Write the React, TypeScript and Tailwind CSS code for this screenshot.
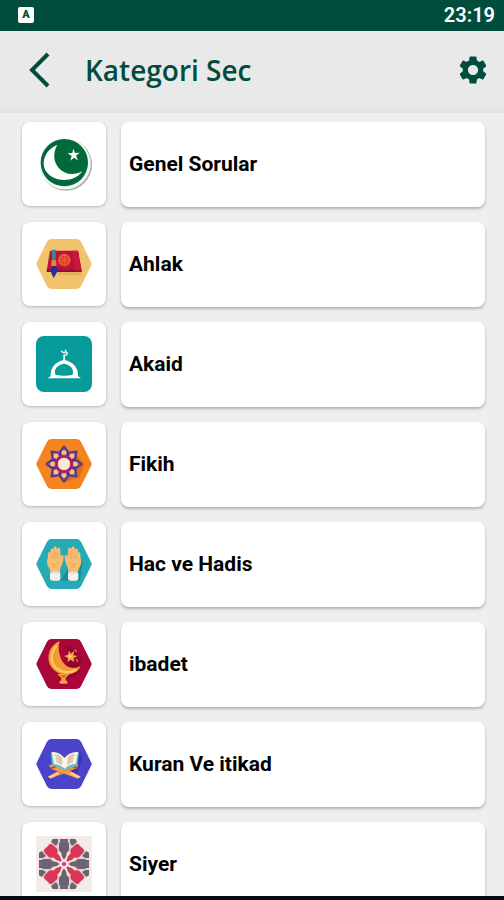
import { FC, ReactNode } from "react";
import { MdSettings } from "react-icons/md";

interface Category {
  id: string;
  title: string;
  icon: ReactNode;
}

interface HexagonProps {
  color: string;
  children: ReactNode;
}

const Hexagon: FC<HexagonProps> = ({ color, children }) => (
  <svg viewBox="0 0 168 168" className="size-14" aria-hidden="true">
    <path
      d="M2 80 L33 17 Q37 9 46 9 H122 Q131 9 135 17 L166 80 Q168 84 166 88 L135 151 Q131 159 122 159 H46 Q37 159 33 151 L2 88 Q0 84 2 80Z"
      fill={color}
    />
    {children}
  </svg>
);

const FlagIcon = () => (
  <svg viewBox="0 0 168 168" className="size-14 overflow-visible" aria-hidden="true">
    <circle cx="90" cy="86" r="78" fill="#a9b0ac" />
    <circle cx="87" cy="83" r="77" fill="#f7f9f8" />
    <circle cx="85" cy="80" r="71" fill="#016a3b" />
    <path
      d="M64 27C32 38 12 76 30 106C52 140 116 142 139 106C114 120 86 116 69 97C52 78 50 50 64 27Z"
      fill="#fff"
    />
    <path d="M112 38l5 13 14-1-11 9 6 14-12-8-11 9 4-14-12-8 14-1z" fill="#fff" />
  </svg>
);

const BookIcon = () => (
  <Hexagon color="#f3c26c">
    <path d="M50 104 L70 118 H138 L134 104Z" fill="#e2b25b" />
    <path d="M42 44 H126 L137 104 H32Z" fill="#bd1236" />
    <path d="M32 101 H137 V108 H32Z" fill="#8f0d35" />
    <path d="M108 44 H126 L137 104 H119Z" fill="#c5183a" />
    <circle cx="85" cy="72" r="20" fill="#d93a2b" />
    <circle cx="85" cy="72" r="15" fill="none" stroke="#ef7f3c" strokeWidth="4" strokeDasharray="6 4" />
    <path d="M85 55v34M68 72h34M73 60l24 24M97 60l-24 24" stroke="#e8613a" strokeWidth="3" />
    <path d="M48 41h11v34H48z" fill="#348c8c" />
    <path d="M47 72h13l2 20H45z" fill="#ef7d33" />
    <path d="M46 90h16q5 14-2 24l-7 12-6-12q-6-12-1-24z" fill="#2b2c98" />
  </Hexagon>
);

const DomeIcon = () => (
  <svg viewBox="0 0 168 168" className="size-14" aria-hidden="true">
    <rect width="168" height="168" rx="24" fill="#079b9b" />
    <path d="M34 127L44 121C42 96 58 78 82 72V56h5v16c24 6 41 24 39 49l9 6z" fill="#fff" />
    <path d="M59 117C50 99 67 86 84 83C101 86 117 99 109 117Q84 121 59 117Z" fill="#079b9b" />
    <path
      d="M77 46c5 7 13 5 12-3M85 58c10 0 11-10 3-10"
      fill="none"
      stroke="#d9f3f1"
      strokeWidth="5"
      strokeLinecap="round"
    />
  </svg>
);

const angles = [0, 45, 90, 135, 180, 225, 270, 315];

const RosetteIcon = () => (
  <Hexagon color="#f5831f">
    <path d="M121 58l24 26-14 40-46 14-28-28z" fill="#dc6c18" />
    {angles.map((angle) => (
      <g key={angle} transform={`rotate(${angle} 84 84)`}>
        <path
          d="M84 31L97 49L92 62H76L71 49Z"
          fill="#b66a6a"
          stroke="#4d3a94"
          strokeWidth="6"
          strokeLinejoin="round"
        />
        <circle cx="84" cy="50" r="7" fill="#f7c48a" />
      </g>
    ))}
    <circle cx="84" cy="84" r="22" fill="#fff" stroke="#c01858" strokeWidth="7" />
    {angles.map((angle) => (
      <path key={angle} d="M84 55l6 8H78z" fill="#c01858" transform={`rotate(${angle} 84 84)`} />
    ))}
    <circle cx="84" cy="84" r="18" fill="#f6ead9" />
  </Hexagon>
);

// one open palm, mirrored for the other side
const Palm = () => (
  <>
    <path
      d="M38 88C31 78 33 66 36 58C34 47 37 41 43 45C42 34 48 29 52 36C53 23 61 23 63 34C68 26 75 32 73 43L75 58C76 52 82 49 83 55C83 70 80 78 74 88L71 106H45Z"
      fill="#f9bd72"
    />
    <path
      d="M46 48l4 16M56 40v22M67 42l-4 20M46 78q13 10 22-5M52 88l12 1"
      fill="none"
      stroke="#eda75c"
      strokeWidth="3"
      strokeLinecap="round"
    />
    <rect x="42" y="102" width="31" height="27" rx="7" fill="#f4f1ea" />
    <path d="M44 104q14 6 28 0" fill="none" stroke="#d5d8d2" strokeWidth="3" />
  </>
);

const HandsIcon = () => (
  <Hexagon color="#25abb5">
    <path d="M72 134h60l8-58-20-14z" fill="#16909c" />
    <g transform="translate(0 5)">
      <Palm />
    </g>
    <g transform="translate(169 5) scale(-1 1)">
      <Palm />
    </g>
  </Hexagon>
);

const CrescentIcon = () => (
  <Hexagon color="#aa0639">
    <path d="M92 30q42 8 46 50q0 34-34 44l-14 4z" fill="#920532" />
    <path
      d="M71 16C40 27 28 66 46 93C66 125 122 122 134 90C114 101 92 96 80 78C69 60 65 36 71 16Z"
      fill="#f49a35"
    />
    <path
      d="M60 32C42 52 44 80 58 94C74 110 102 112 118 103"
      fill="none"
      stroke="#ffc768"
      strokeWidth="7"
      strokeLinecap="round"
    />
    <path d="M64 114h36l-11 12v8h5v9H71v-9h5v-8z" fill="#f7a43c" />
    <path d="M72 118h20l-10 8z" fill="#c96a28" />
    <path
      d="M99 43l5 10 11-9-3 14 13 2-12 6 2 12-11-7-10 7 2-12-12-6 12-4z"
      fill="#f8a13f"
    />
    <circle cx="102" cy="61" r="5" fill="#ffd07e" />
    <path d="M117 42l4 5M121 70l4 6" stroke="#e07f35" strokeWidth="4" strokeLinecap="round" />
  </Hexagon>
);

const QuranIcon = () => (
  <Hexagon color="#4a44cb">
    <path d="M62 104L132 44L140 66L124 112Z" fill="#3b36b0" />
    <path d="M36 122L106 84L128 86L122 97L44 128Z" fill="#e98d46" />
    <path d="M134 122L64 84L38 88L46 99L126 128Z" fill="#f39a4a" />
    <path d="M36 122l28-14 6 5-26 14zM134 122l-28-14-6 5 26 14z" fill="#f8cf9b" />
    <path d="M44 97l18-7M123 96l-18-7" stroke="#d04a2e" strokeWidth="6" />
    <path d="M44 48L84 66L129 48L124 88L86 103L48 88Z" fill="#62c0c8" />
    <path d="M48 48Q70 46 85 66Q102 46 126 48L119 84Q100 84 86 98Q70 84 54 84Z" fill="#fbf3e3" />
    <path
      d="M57 58q12 0 20 12M59 67q10 0 18 11M61 76q9 0 16 9M115 58q-12 0-20 12M113 67q-10 0-18 11M111 76q-9 0-16 9"
      fill="none"
      stroke="#d9c3a2"
      strokeWidth="6"
    />
  </Hexagon>
);

const GeometricIcon = () => (
  <svg viewBox="0 0 168 168" className="size-14" aria-hidden="true">
    <rect width="168" height="168" fill="#f1ece8" />
    <path d="M54 8H114L160 54V114L114 160H54L8 114V54Z" fill="#ddd5d4" />
    {[0, 90, 180, 270].map((angle) => (
      <g key={angle} transform={`rotate(${angle} 84 84)`}>
        <path d="M72 9H96V20H99V43L92 50L90 62L84 70L78 62L76 50L69 43V20H72Z" fill="#6e6170" />
        <path d="M50 9H66V20L60 30L45 17ZM102 9H118L123 17L108 30L102 20Z" fill="#6e6170" />
        <path
          d="M71 12H97L101 18V40L92 48V60L84 74L76 60V48L67 40V18Z"
          fill="#dc3456"
          transform="rotate(45 84 84)"
        />
      </g>
    ))}
    {angles.map((angle) => (
      <path
        key={angle}
        d="M84 80V46"
        stroke="#f1ece8"
        strokeWidth="3"
        transform={`rotate(${angle + 22} 84 84)`}
      />
    ))}
    <circle cx="84" cy="84" r="10" fill="#f1ece8" />
    <circle cx="84" cy="84" r="6" fill="#dc3456" />
  </svg>
);

const categories: Category[] = [
  { id: "genel", title: "Genel Sorular", icon: <FlagIcon /> },
  { id: "ahlak", title: "Ahlak", icon: <BookIcon /> },
  { id: "akaid", title: "Akaid", icon: <DomeIcon /> },
  { id: "fikih", title: "Fikih", icon: <RosetteIcon /> },
  { id: "hac", title: "Hac ve Hadis", icon: <HandsIcon /> },
  { id: "ibadet", title: "ibadet", icon: <CrescentIcon /> },
  { id: "kuran", title: "Kuran Ve itikad", icon: <QuranIcon /> },
  { id: "siyer", title: "Siyer", icon: <GeometricIcon /> },
];

const StatusBar = () => (
  <div className="flex h-[31px] shrink-0 items-center justify-between bg-[#004d3d] pb-0.5 pl-[18px] pr-[9px]">
    <span className="flex size-4 items-center justify-center rounded-xs bg-white font-['Roboto',sans-serif] text-[11px] font-black leading-none text-[#004d3d]">
      A
    </span>
    <time className="font-['Roboto',sans-serif] text-[20px] font-semibold leading-none text-white">
      23:19
    </time>
  </div>
);

const Header = () => (
  <header className="flex h-[82px] shrink-0 items-center border-b-4 border-[#e3e3e3] bg-[#e9e9e9] pl-7 pr-3.5">
    <button type="button" aria-label="Geri" className="cursor-pointer">
      <svg viewBox="0 0 24 36" className="h-9 w-6" fill="none" stroke="#004d3d" strokeWidth="4">
        <path d="M20 2L4 18L20 34" />
      </svg>
    </button>
    <h1 className="ml-[33px] flex-1 font-['Open_Sans',sans-serif] text-[28px] font-semibold leading-9 text-[#004d3d]">
      Kategori Sec
    </h1>
    <button type="button" aria-label="Ayarlar" className="cursor-pointer text-[#004d3d]">
      <MdSettings size={34} />
    </button>
  </header>
);

const CategoryRow = ({ title, icon }: Category) => (
  <li>
    <button type="button" className="flex w-full cursor-pointer gap-[15px] text-left">
      <span className="flex size-[84px] shrink-0 items-center justify-center rounded-lg bg-white shadow-[0_1px_3px_rgba(0,0,0,0.25)]">
        {icon}
      </span>
      <span className="flex h-[85px] flex-1 items-center rounded-lg bg-white px-2 font-['Roboto',sans-serif] text-[21px] font-bold text-black shadow-[0_2px_3px_rgba(0,0,0,0.25)]">
        {title}
      </span>
    </button>
  </li>
);

export default function App() {
  return (
    <div className="flex h-screen flex-col overflow-hidden border-b-4 border-[#0b0818] bg-[#eeeeee]">
      <StatusBar />
      <Header />
      <main className="min-h-0 flex-1 overflow-hidden pl-[22px] pr-[19px] pt-[9px]">
        <ul className="flex flex-col gap-[15px]">
          {categories.map((category) => (
            <CategoryRow key={category.id} {...category} />
          ))}
        </ul>
      </main>
    </div>
  );
}
